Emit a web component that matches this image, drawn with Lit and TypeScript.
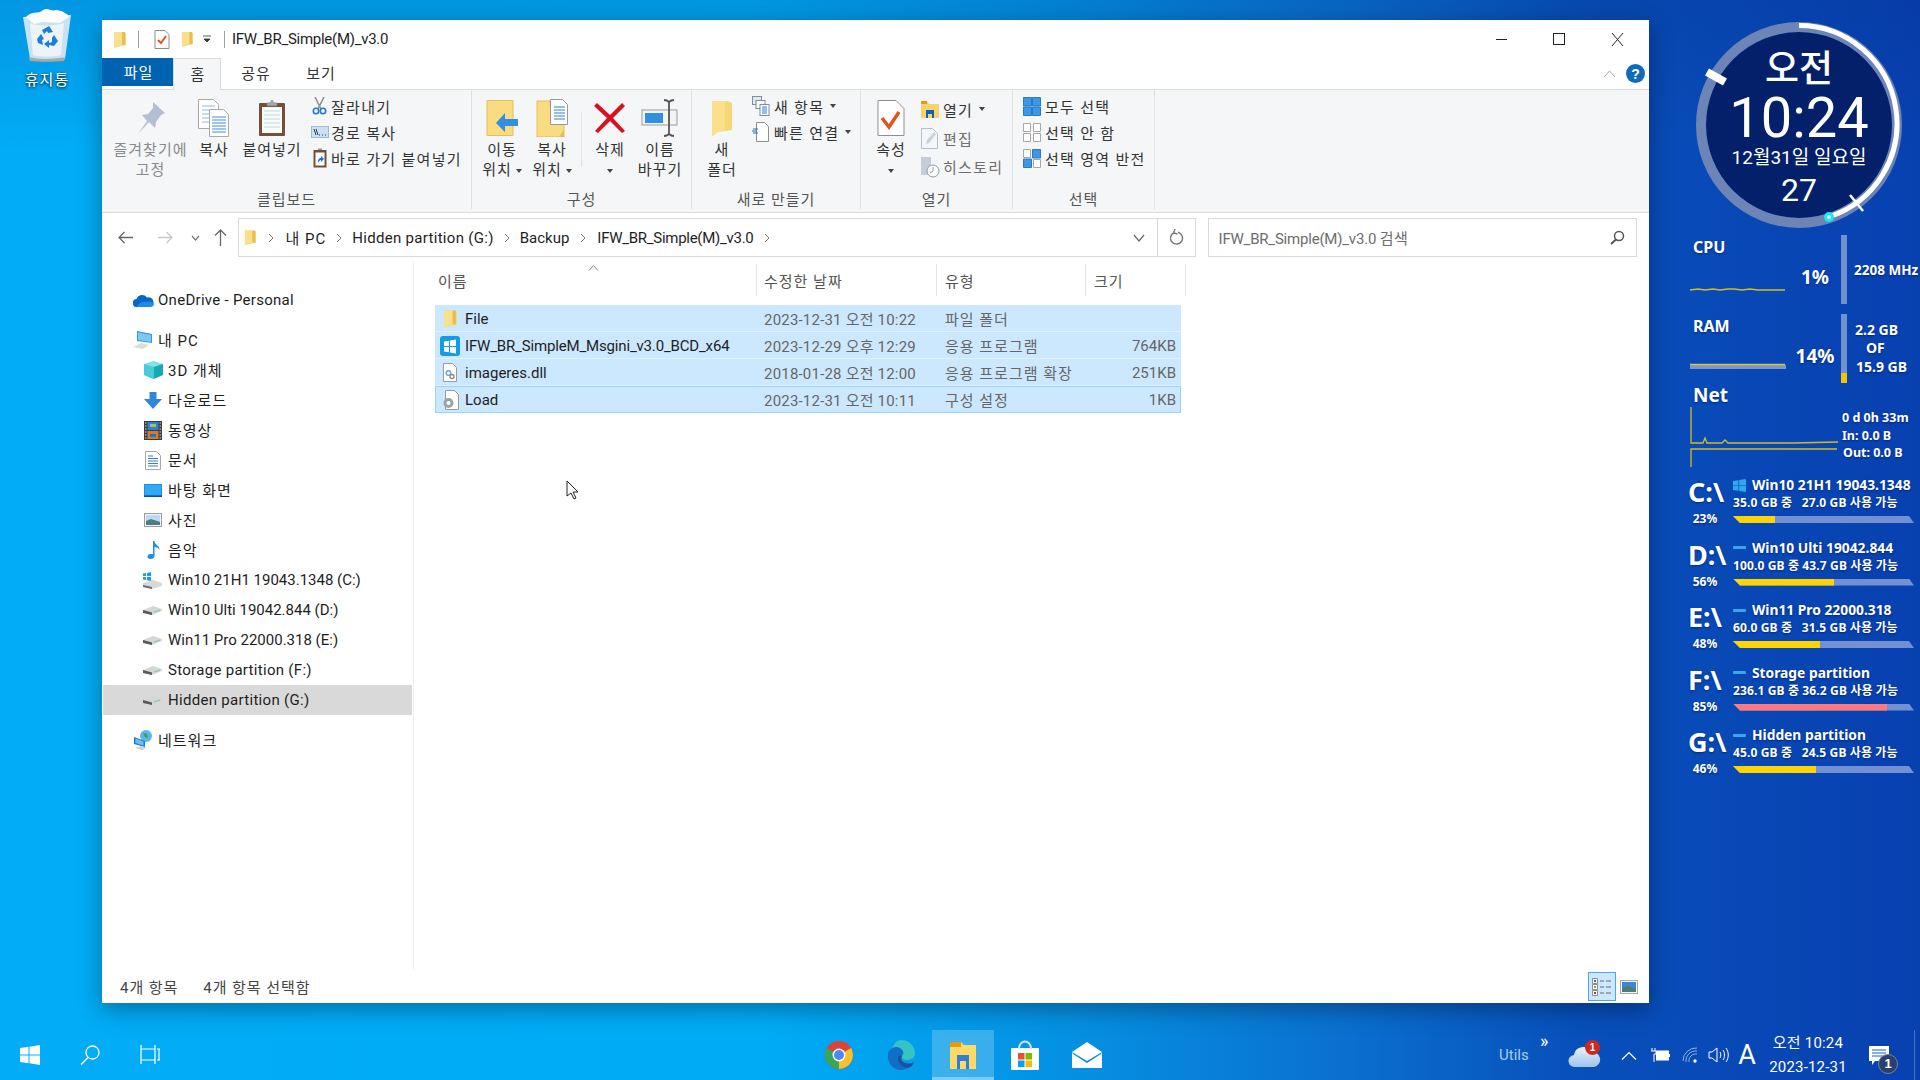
import { LitElement, html, css } from "lit";
import { customElement } from "lit/decorators.js";

const folder = (w = 14, h = 17) => html`<svg width=${w} height=${h} viewBox="0 0 14 17"><path d="M1 1h9l3 1v12l-9 2-3 1z" fill="#f7d774"/><path d="M1 1h8v13l-5 1-3 2z" fill="#fbe08c"/><path d="M9 1h3v13H9z" fill="#e8bd52"/></svg>`;
const doccheck = (w = 16, h = 19) => html`<svg width=${w} height=${h} viewBox="0 0 16 19"><path d="M1 .5h10l4 4v14H1z" fill="#fff" stroke="#8d8d8d"/><path d="M4 10l3 3 5-7" fill="none" stroke="#e2531d" stroke-width="2"/></svg>`;
const winlogo = (s = 20, c = "#fff") => html`<svg width=${s} height=${s} viewBox="0 0 20 20"><path fill=${c} d="M0 3l8.500-1.200v7.700H0zM9.500 1.700L20 0v9.500H9.500zM0 10.500h8.500v7.700L0 17zM9.500 10.500H20V20L9.500 18.300z"/></svg>`;

const I = {
  pin: html`<svg width="30" height="34" viewBox="0 0 30 34"><path d="M17 1l12 11-4 2-5 7-1 6-6-6L2 33l9-13-5-6 6-1 5-6z" fill="#b3c0d4"/></svg>`,
  copy: html`<svg width="32" height="38" viewBox="0 0 32 38"><path d="M.5.5h15l5 5v24H.5z" fill="#fff" stroke="#a9a9a9"/><path d="M4 7h13M4 11h13M4 15h13M4 19h13M4 23h13" stroke="#8fb8e8"/><path d="M11.500 10.500h14l5 5v22h-19z" fill="#fff" stroke="#a9a9a9"/><path d="M14 18h14M14 21h14M14 24h14M14 27h14M14 30h14M14 33h14" stroke="#3b8ee0"/></svg>`,
  paste: html`<svg width="28" height="38" viewBox="0 0 28 38"><rect x="1" y="4" width="26" height="33" fill="#74503a" rx="1"/><rect x="4" y="8" width="20" height="26" fill="#fbfbf6"/><path d="M6 12h16M6 16h16M6 20h16M6 24h16M6 28h16" stroke="#bcd8f0"/><path d="M9 7V4h3l2-3 2 3h3v3z" fill="#aaa" stroke="#777" stroke-width=".6"/></svg>`,
  cut: html`<svg width="15" height="18" viewBox="0 0 15 18"><path d="M3 0l6 12M12 0L6 12" stroke="#8f8f8f" stroke-width="1.600"/><circle cx="4" cy="14" r="2.700" fill="none" stroke="#1d79d4" stroke-width="1.600"/><circle cx="11" cy="14" r="2.700" fill="none" stroke="#1d79d4" stroke-width="1.600"/></svg>`,
  path: html`<svg width="18" height="12" viewBox="0 0 18 12"><rect x=".5" y=".5" width="17" height="11" fill="#c9e2f8" stroke="#9fb9d4"/><path d="M3 3l2 6M5 3l2 6M8 9h1M11 9h1M14 9h1" stroke="#334" stroke-width="1"/></svg>`,
  scut: html`<svg width="14" height="20" viewBox="0 0 14 20"><rect x=".5" y="2" width="13" height="17.500" fill="#74503a"/><rect x="2.500" y="4.500" width="9" height="13" fill="#fff"/><path d="M5 2V.5h4V2z" fill="#999"/><path d="M5 15c0-4 1-5 3-5V8l3 3-3 3v-2c-1 0-2 1-3 3z" fill="#1b6fc9"/></svg>`,
  move: html`<svg width="32" height="36" viewBox="0 0 32 36"><path d="M1 .5h26v35H1z" fill="#f9dc82" stroke="#e4bf5c"/><path d="M32 19H19v-6l-9 10 9 9v-6h13z" fill="#2f8fe0"/></svg>`,
  copyto: html`<svg width="32" height="38" viewBox="0 0 32 38"><path d="M1 2h13v5h14v31H1z" fill="#f9dc82" stroke="#e4bf5c"/><path d="M28 30v8l-5 0z" fill="#e4bf5c"/><path d="M14.500.5h12l5 5v20h-17z" fill="#fff" stroke="#999"/><path d="M18 8h11M18 11h11M18 14h11M18 17h11M18 20h11" stroke="#2f7fd6"/></svg>`,
  del: html`<svg width="32" height="32" viewBox="0 0 32 32"><path d="M3 1l13 12L28 1l3 3-12 12 12 13-3 2-12-12L4 31l-3-2 12-13L0 4z" fill="#d81020"/></svg>`,
  rename: html`<svg width="38" height="38" viewBox="0 0 38 38"><rect x="1" y="11" width="35" height="15" fill="#f4f4f4" stroke="#9a9a9a"/><rect x="4" y="14" width="18" height="10" fill="#2f8fe0"/><path d="M23 1c3 0 4 1 5 2 1-1 2-2 5-2M28 3v32M23 37c3 0 4-1 5-2 1 1 2 2 5 2" fill="none" stroke="#555" stroke-width="1.800"/></svg>`,
  newf: html`<svg width="24" height="36" viewBox="0 0 24 36"><path d="M2 1h15l5 2v27l-14 2-6 4z" fill="#f7d774"/><path d="M2 1h13v29l-7 2-6 4z" fill="#fbe08c"/></svg>`,
  newi: html`<svg width="18" height="20" viewBox="0 0 18 20"><rect x=".5" y=".5" width="9" height="8" fill="#dbe9f8" stroke="#7f8d9c"/><rect x="4" y="4.500" width="9" height="8" fill="#fff" stroke="#7f8d9c"/><rect x="8" y="8.500" width="9" height="11" fill="#fff" stroke="#7f8d9c"/><path d="M10 11h5M10 13h5M10 15h5M10 17h5" stroke="#2f7fd6"/></svg>`,
  easy: html`<svg width="17" height="20" viewBox="0 0 17 20"><path d="M4.500.5h8l4 4v15h-12z" fill="#fff" stroke="#8d8d8d"/><path d="M1 7h5M0 9h5M1 11h5" stroke="#1b6fc9"/></svg>`,
  prop: html`<svg width="28" height="36" viewBox="0 0 28 36"><path d="M1 .5h18l8 8v27H1z" fill="#fff" stroke="#8f8f8f"/><path d="M5 18l7 9 10-15" fill="none" stroke="#e2531d" stroke-width="3.500"/></svg>`,
  open: html`<svg width="20" height="20" viewBox="0 0 20 20"><path d="M1 2h6l2 3h10v14H1z" fill="#f7d370"/><path d="M1 2h6v3H1z" fill="#d99c22"/><path d="M6 11h8v8h-2v-4H8v4H6z" fill="#1261b5"/></svg>`,
  edit: html`<svg width="17" height="21" viewBox="0 0 17 21"><path d="M.5.5h11l5 5v15H.5z" fill="#f4f6fa" stroke="#b3bdcc"/><path d="M5 16l1-4L13 4l2 2-7 9z" fill="#c7d1e0"/></svg>`,
  hist: html`<svg width="20" height="22" viewBox="0 0 20 22"><path d="M1 1h10v18H1z" fill="#c4cdd9"/><circle cx="13" cy="15" r="6" fill="#fff" stroke="#8f9ba8"/><path d="M13 11v4l-3 2" stroke="#8f9ba8" fill="none"/></svg>`,
  all: html`<svg width="18" height="19" viewBox="0 0 18 19"><path fill="#3d97e6" stroke="#2a79c8" d="M.5.5h8v8.500h-8zM9.500.5h8v8.500h-8zM.5 10h8v8.500h-8zM9.500 10h8v8.500h-8z"/></svg>`,
  none: html`<svg width="18" height="19" viewBox="0 0 18 19"><path fill="#fff" stroke="#a8a8a8" d="M.5.5h7v8h-7zM10.500.5h7v8h-7zM.5 10.500h7v8h-7zM10.500 10.500h7v8h-7z"/></svg>`,
  inv: html`<svg width="18" height="19" viewBox="0 0 18 19"><path fill="#fff" stroke="#a8a8a8" d="M.5.5h7v8h-7zM10.500 10.500h7v8h-7z"/><path fill="#3d97e6" stroke="#2a79c8" d="M9.500.5h8v8.500h-8zM.5 10h8v8.500h-8z"/></svg>`,
  cloud: html`<svg width="21" height="13" viewBox="0 0 21 13"><path d="M4 13a4 4 0 0 1-.5-8A6 6 0 0 1 14 3.500a4.500 4.500 0 0 1 3 9.500z" fill="#0a65c8"/><path d="M4 13c1-3 5-6 9-5 3-2 7 0 8 2 0 2-2 3-4 3z" fill="#1c8cea"/></svg>`,
  pc: html`<svg width="20" height="18" viewBox="0 0 20 18"><path d="M4 0l15 3v9L4 10z" fill="#2f9be8"/><path d="M5 1.500l13 2.500v7L5 9z" fill="#7cc7f5"/><path d="M0 16l8-4 8 2-6 4z" fill="#dcdcdc"/></svg>`,
  cube: html`<svg width="19" height="18" viewBox="0 0 19 18"><path d="M9.500 0L19 3v11l-9.500 4L0 14V3z" fill="#7fe3e3"/><path d="M9.500 6L19 3v11l-9.500 4z" fill="#19a7b8"/><path d="M0 3l9.500 3v12L0 14z" fill="#48cbd6"/></svg>`,
  down: html`<svg width="18" height="17" viewBox="0 0 18 17"><path d="M5.500 0h7v7H18l-9 10L0 7h5.500z" fill="#2f86dc"/></svg>`,
  film: html`<svg width="18" height="19" viewBox="0 0 18 19"><rect width="18" height="19" fill="#3b3b3b"/><rect x="3.500" y="1" width="11" height="8" fill="#2f7fd6"/><rect x="3.500" y="10" width="11" height="8" fill="#d8782a"/><path d="M6 3h6v3H6z" fill="#9c5"/><path d="M6 13h6v3H6z" fill="#27b"/><path d="M1 2h1.500M1 5h1.500M1 8h1.500M1 11h1.500M1 14h1.500M1 17h1.500M15.500 2H17M15.500 5H17M15.500 8H17M15.500 11H17M15.500 14H17M15.500 17H17" stroke="#ddd"/></svg>`,
  docs: html`<svg width="16" height="19" viewBox="0 0 16 19"><path d="M.5.5h11l4 4v14H.5z" fill="#fff" stroke="#a8a8a8"/><path d="M3 5h5M3 7.500h10M3 10h10M3 12.500h10M3 15h10" stroke="#3a7fc8"/></svg>`,
  desk: html`<svg width="18" height="13" viewBox="0 0 18 13"><rect width="18" height="13" fill="#1c8fe8"/><rect x="1" y="1" width="16" height="10" fill="#31a9f3"/><rect y="11.500" width="18" height="1.500" fill="#0b4f9a"/></svg>`,
  pic: html`<svg width="18" height="14" viewBox="0 0 18 14"><rect x=".5" y=".5" width="17" height="13" fill="#f5f5f5" stroke="#9c9c9c"/><rect x="2" y="2" width="14" height="10" fill="#b9daf2"/><path d="M2 8l5-2 9 3v3H2z" fill="#4d7d83"/></svg>`,
  music: html`<svg width="13" height="18" viewBox="0 0 13 18"><path d="M6 0h1.500c0 4 5 4 5 9-1-2-3-3-5-3v9c0 2-2 3-4 3s-3-1-3-2.500S2 13 4 13c1 0 1.500 0 2 .3z" fill="#1c8fe8"/></svg>`,
  driveC: html`<svg width="20" height="17" viewBox="0 0 20 17"><path d="M0 11l10-3 9 3v3l-10 3L0 15z" fill="#d8d8d8"/><path d="M0 13l9 2v2l-9-2z" fill="#6b6b6b"/><path fill="#12a0ee" d="M0 1.500l3-.5v3H0zM4 1l4-1v4H4zM0 5h3v3l-3-.5zM4 5h4v4l-4-.7z"/></svg>`,
  drive: html`<svg width="20" height="10" viewBox="0 0 20 10"><path d="M0 5l10-4 9 3v2L9 10 0 7.500z" fill="#d6d6d6"/><path d="M0 5l9 2.500V10L0 8z" fill="#5a5a5a"/><path d="M11 7l6-2" stroke="#90c090"/></svg>`,
  net: html`<svg width="20" height="20" viewBox="0 0 20 20"><circle cx="13" cy="6" r="6" fill="#59b7ea"/><path d="M10 3l4 1 1 4-3-1z" fill="#3e9a4c"/><path d="M1 7l11 4v6l-11-3z" fill="#1f7cd0"/><path d="M2.500 8.500l8 3v4l-8-2.500z" fill="#6cc0f0"/><path d="M2 18l6-2 6 2-5 2z" fill="#cfcfcf"/></svg>`,
  fileFolder: html`<svg width="15" height="19" viewBox="0 0 14 17"><path d="M1 1h9l3 1v12l-9 2-3 1z" fill="#f7d774"/><path d="M1 1h8v13l-5 1-3 2z" fill="#fbe08c"/><path d="M9 1h3v13H9z" fill="#e8bd52"/></svg>`,
  app: html`<svg width="20" height="20" viewBox="0 0 20 20"><rect width="20" height="20" rx="3" fill="#129ce4"/><path fill="#fff" d="M4 5.500l5-.8V10H4zM10 4.500l6-1V10h-6zM4 11h5v5.300l-5-.8zM10 11h6v6.500l-6-1z"/></svg>`,
  dll: html`<svg width="14" height="19" viewBox="0 0 14 19"><path d="M.5.5h9l4 4v14H.5z" fill="#fff" stroke="#9a9a9a"/><circle cx="5.500" cy="10" r="2.300" fill="none" stroke="#7d9fc0" stroke-width="1.500"/><circle cx="9" cy="13.500" r="2" fill="none" stroke="#8a8a8a" stroke-width="1.400"/></svg>`,
  ini: html`<svg width="17" height="20" viewBox="0 0 17 20"><path d="M3.500.5h9l4 4v15h-13z" fill="#fff" stroke="#9a9a9a"/><circle cx="6.500" cy="13" r="5" fill="#9aa3ac"/><circle cx="6.500" cy="13" r="2" fill="#fff"/></svg>`,
};

const dd = html`<i class="dd"></i>`;
const chev = html`<svg width="6" height="10" viewBox="0 0 6 10"><path d="M1 1l4 4-4 4" fill="none" stroke="#777"/></svg>`;

type Item = any;
const groups: { w: number; label: string; items: Item[] }[] = [
  { w: 370, label: "클립보드", items: [
    { w: 97, icon: I.pin, l: ["즐겨찾기에", "고정"], off: true },
    { w: 30, icon: I.copy, l: ["복사"] },
    { w: 80, ml: 3, icon: I.paste, l: ["붙여넣기"] },
    { ml: -1, list: [[I.cut, "잘라내기"], [I.path, "경로 복사"], [I.scut, "바로 가기 붙여넣기"]] },
  ] },
  { w: 220, label: "구성", items: [
    { w: 48, ml: 6, icon: I.move, l: ["이동", "위치"], d: 1 },
    { w: 48, ml: 2, icon: I.copyto, l: ["복사", "위치"], d: 1 },
    { sep: 1, ml: 5 },
    { w: 48, ml: 4, icon: I.del, l: ["삭제", ""], d: 1 },
    { w: 48, ml: 2, icon: I.rename, l: ["이름", "바꾸기"] },
  ] },
  { w: 169, label: "새로 만들기", items: [
    { w: 48, ml: 6, icon: I.newf, l: ["새", "폴더"] },
    { ml: 8, shift: 1, list: [[I.newi, "새 항목", 1], [I.easy, "빠른 연결", 1]] },
  ] },
  { w: 152, label: "열기", items: [
    { w: 48, ml: 6, icon: I.prop, l: ["속성", ""], d: 1 },
    { ml: 8, tall: 1, shift: 1, list: [[I.open, "열기", 1], [I.edit, "편집", 0, 1], [I.hist, "히스토리", 0, 1]] },
  ] },
  { w: 142, label: "선택", items: [
    { ml: 12, shift: 1, list: [[I.all, "모두 선택"], [I.none, "선택 안 함"], [I.inv, "선택 영역 반전"]] },
  ] },
];

const tree: [any, string, string][] = [
  [I.cube, "3D 개체", "k"], [I.down, "다운로드", "k"], [I.film, "동영상", "k"], [I.docs, "문서", "k"],
  [I.desk, "바탕 화면", "k"], [I.pic, "사진", "k"], [I.music, "음악", "k"],
  [I.driveC, "Win10 21H1 19043.1348 (C:)", ""], [I.drive, "Win10 Ulti 19042.844 (D:)", ""],
  [I.drive, "Win11 Pro 22000.318 (E:)", ""], [I.drive, "Storage partition (F:)", "w"],
  [I.drive, "Hidden partition (G:)", "w"],
];

const files = [
  [I.fileFolder, "File", "2023-12-31 오전 10:22", "파일 폴더", ""],
  [I.app, "IFW_BR_SimpleM_Msgini_v3.0_BCD_x64", "2023-12-29 오후 12:29", "응용 프로그램", "764KB"],
  [I.dll, "imageres.dll", "2018-01-28 오전 12:00", "응용 프로그램 확장", "251KB"],
  [I.ini, "Load", "2023-12-31 오전 10:11", "구성 설정", "1KB"],
];

const drives = [
  ["C:\\", "23%", "Win10 21H1 19043.1348", "35.0 GB 중 \u00a0 27.0 GB 사용 가능", 23],
  ["D:\\", "56%", "Win10 Ulti 19042.844", "100.0 GB 중 43.7 GB 사용 가능", 56],
  ["E:\\", "48%", "Win11 Pro 22000.318", "60.0 GB 중 \u00a0 31.5 GB 사용 가능", 48],
  ["F:\\", "85%", "Storage partition", "236.1 GB 중 36.2 GB 사용 가능", 85],
  ["G:\\", "46%", "Hidden partition", "45.0 GB 중 \u00a0 24.5 GB 사용 가능", 46],
];

@customElement("app-root")
export class AppRoot extends LitElement {
  static styles = css`
    :host { display: block; position: relative; width: 1920px; height: 1080px; overflow: hidden;
      font-family: Roboto, "Noto Sans CJK KR", sans-serif; font-size: 15px; color: #1e1e1e;
      background:
        linear-gradient(180deg, rgba(0,40,120,.16), rgba(0,40,120,0) 14%),
        linear-gradient(90deg, #02acf6 0, #00abf5 40%, #0590e2 56%, #0a70cf 70%, #0850bb 82%, #0840b0 100%); }
    svg { display: block; flex: none; }
    .k { letter-spacing: 1px; }
    .w0 { letter-spacing: -.27px; }
    .w1 { letter-spacing: -.16px; }
    .w { letter-spacing: .3px; }
    .bin { position: absolute; left: 8px; top: 8px; width: 78px; display: flex; flex-direction: column; align-items: center; gap: 6px; color: #fff; text-shadow: 0 1px 3px #000; letter-spacing: 1px; }
    .window { position: absolute; left: 102px; top: 20px; width: 1547px; height: 983px; background: #fff; display: flex; flex-direction: column; box-shadow: 0 6px 22px rgba(0,0,0,.35); }
    .title { height: 38px; display: flex; align-items: center; flex: none; position: relative; }
    .title .ql { display: flex; align-items: center; width: 130px; padding-left: 11px; box-sizing: border-box; }
    .vs { width: 1px; height: 17px; background: #a0a0a0; }
    .s15 { margin: 0 15px 0 11px; }
    .ga { width: 11px; flex: none; } .gb { width: 9px; flex: none; } .gc { width: 13px; flex: none; }
    .ctrl { margin-left: auto; display: flex; padding-right: 3px; }
    .ctrl span { width: 58px; height: 38px; display: flex; align-items: center; justify-content: center; }
    .tabs { height: 31px; display: flex; flex: none; align-items: stretch; position: relative; z-index: 1; }
    .tab { display: flex; align-items: center; justify-content: center; color: #333; padding: 0 0 2px 2px; box-sizing: border-box; letter-spacing: 1px; }
    .tab.file { width: 71px; height: 28px; background: #0063b1; color: #fff; }
    .tab.home { width: 48px; background: #f5f6f7; border: 1px solid #dadbdc; border-bottom: none; height: 32px; }
    .tab.t3 { width: 66px; padding-left: 4px; } .tab.t4 { width: 64px; padding-left: 4px; }
    .tabs .right { margin-left: auto; display: flex; align-items: center; gap: 10px; padding-right: 4px; }
    .help { width: 19px; height: 19px; border-radius: 50%; background: #0f6cbd; color: #fff; font: bold 14px "Liberation Sans", sans-serif; display: flex; align-items: center; justify-content: center; }
    .ribbon { height: 124px; flex: none; display: flex; background: #f5f6f7; border-top: 1px solid #dadbdc; border-bottom: 1px solid #dadbdc; box-sizing: border-box; }
    .group { display: flex; flex-direction: column; border-right: 1px solid #dfe0e2; box-sizing: border-box; margin-bottom: 3px; flex: none; }
    .items { flex: 1; display: flex; min-height: 0; }
    .glabel { height: 28px; box-sizing: border-box; padding-top: 6px; display: flex; align-items: center; justify-content: center; color: #555; letter-spacing: 1px; }
    .big { display: flex; flex-direction: column; align-items: center; padding-top: 5px; text-align: center; flex: none; color: #333; letter-spacing: 1px; white-space: nowrap; }
    .big .ic { height: 45px; display: flex; align-items: center; justify-content: center; }
    .big div.t { line-height: 21px; height: 20.500px; display: flex; align-items: center; gap: 4px; justify-content: center; }
    .big.off { color: #8a8a8a; }
    .dd { display: inline-block; width: 0; height: 0; border-top: 4px solid #444; border-left: 3px solid transparent; border-right: 3px solid transparent; flex: none; }
    .rsep { width: 1px; height: 55px; background: #dfe0e2; margin-top: 22px; flex: none; }
    .list { display: flex; flex-direction: column; padding-top: 3px; flex: none; color: #333; }
    .small { height: 26px; display: flex; align-items: center; gap: 3px; letter-spacing: 1.300px; white-space: nowrap; }
    .list.tall { padding-top: 5px; } .list.tall .small { height: 29px; }
    .list.shift .si svg { transform: translateX(-2px); }
    .small.off { color: #6e6e6e; }
    .small .si { width: 17px; display: flex; justify-content: center; flex: none; }
    .small .dd { margin-left: 3px; }
    .nav { height: 49px; flex: none; display: flex; align-items: center; position: relative; }
    .navb { width: 135.500px; display: flex; align-items: center; flex: none; box-sizing: border-box; padding-left: 16px; }
    .navb span { display: flex; justify-content: center; flex: none; }
    .nb1 { width: 16px; } .nb2a { width: 39px; margin-left: 11.500px; } .nb3 { width: 12px; margin-left: 4.500px; } .nb4 { width: 14px; margin-left: 12px; }
    .addr { width: 958px; height: 39px; box-sizing: border-box; border: 1px solid #d9d9d9; display: flex; align-items: center; flex: none; }
    .addr .crumbs { flex: 1; display: flex; align-items: center; padding-left: 5px; }
    .crumbs .c { color: #666; flex: none; display: flex; justify-content: center; }
    .crumbs .c1w { width: 29px; } .crumbs .c2w { width: 26px; } .crumbs .c3w { width: 26px; } .crumbs .c4w { width: 28px; } .crumbs .c5w { width: 26px; }
    .addr .ab { height: 37px; display: flex; align-items: center; justify-content: center; box-sizing: border-box; }
    .addr .ab.r { width: 38px; border-left: 1px solid #d9d9d9; padding-left: 2px; }
    .addr .ab.d { width: 38px; padding-left: 2px; }
    .search { width: 429px; height: 39px; margin-left: 12px; box-sizing: border-box; border: 1px solid #d9d9d9; display: flex; align-items: center; justify-content: space-between; padding: 0 11px 0 10px; color: #6d6d6d; flex: none; }
    .search .sk { letter-spacing: .5px; }
    .search .sl { letter-spacing: -.2px; }
    .body { flex: 1; display: flex; min-height: 0; }
    .side { width: 312px; flex: none; border-right: 1px solid #f0f0f0; padding: 23px 0 0 1px; box-sizing: border-box; }
    .node { height: 30px; display: flex; align-items: center; white-space: nowrap; }
    .node .k { position: relative; top: -1px; }
    .node .ni { width: 20px; flex: none; display: flex; justify-content: center; }
    .node.top { padding-left: 30px; gap: 5px; }
    .node.top + .node.top { margin-top: 10px; }
    .node.ch { padding-left: 40px; gap: 5px; }
    .node.sel { background: #d9d9d9; margin-right: 1px; }
    .node.last { margin-top: 10px; }
    .od { letter-spacing: .28px; }
    .main { flex: 1; padding-left: 21px; min-width: 0; }
    .hdr { height: 38px; display: grid; grid-template-columns: 322px 180px 149px 100px; width: 751px; position: relative; color: #555; margin-bottom: 5px; padding-top: 2px; box-sizing: border-box; }
    .hdr div { display: flex; align-items: center; height: 32px; border-right: 1px solid #e5e5e5; padding-left: 7px; box-sizing: border-box; letter-spacing: 1px; }
    .hdr div:first-child { padding-left: 3px; position: relative; }
    .hdr div:nth-child(n+3) { padding-left: 8px; }
    .caret { position: absolute; left: 153px; top: 1px; }
    .row { height: 27px; width: 746px; display: grid; grid-template-columns: 322px 180px 149px 95px; background: #cce8ff; box-sizing: border-box; align-items: center; border-bottom: 1px solid #e0f0ff; color: #666; padding-top: 1px; }
    .row.focus { border-bottom: none; box-shadow: inset 0 0 0 1px #99d1ff; padding-top: 0; }
    .row .nm { display: flex; align-items: center; color: #1e1e1e; white-space: nowrap; }
    .row .nm .fi { width: 30px; display: flex; justify-content: center; flex: none; box-sizing: border-box; }
    .row > div:nth-child(2) { padding-left: 7px; white-space: nowrap; letter-spacing: .2px; }
    .row > div:nth-child(3) { padding-left: 8px; white-space: nowrap; }
    .row > div:nth-child(4) { text-align: right; padding-right: 5px; }
    .status { height: 33px; flex: none; display: flex; align-items: center; color: #444; padding-left: 18px; gap: 25px; letter-spacing: .95px; position: relative; }
    .views { margin-left: auto; display: flex; align-items: center; padding-right: 11px; gap: 4px; }
    .vbtn { width: 28px; height: 29px; box-sizing: border-box; background: #cce8ff; border: 1px solid #4ea6e6; display: flex; align-items: center; justify-content: center; }
    .cursor { position: absolute; left: 566px; top: 480px; }

    .tb { position: absolute; left: 0; right: 0; bottom: 0; height: 50px; display: flex; align-items: center; color: #fff; }
    .tbl { display: flex; width: 180px; flex: none; }
    .tbl span { width: 60px; display: flex; justify-content: center; }
    .tbc { display: flex; margin-left: 628px; }
    .tbc span { width: 62px; height: 50px; display: flex; align-items: center; justify-content: center; box-sizing: border-box; }
    .tbc span.on { background: rgba(255,255,255,.22); border-bottom: 3px solid rgba(255,255,255,.35); padding-top: 3px; }
    .tray { position: absolute; right: 0; top: 0; height: 50px; width: 421px; display: flex; align-items: center; }
    .tray > span { flex: none; }
    .utils { color: #a9cdf0; width: 41px; }
    .more { position: relative; top: -14px; width: 28px; font-size: 18px; color: #fff; line-height: 1; }
    .cloudw { position: relative; width: 53px; flex: none; }
    .badge { position: absolute; left: 17px; top: -3px; width: 15px; height: 15px; border-radius: 50%; background: #d0281c; font: bold 10px "Liberation Sans", sans-serif; display: flex; align-items: center; justify-content: center; color: #fff; }
    .t1 { width: 29px; } .t2 { width: 32px; } .t3x { width: 26px; } .t4x { width: 21px; }
    .tray .A { font: 400 27px Roboto, sans-serif; width: 42px; text-align: center; margin-left: -3px; }
    .clockt { width: 80px; text-align: center; line-height: 24px; font-size: 15px; flex: none; letter-spacing: .2px; white-space: nowrap; }
    .note { position: relative; margin-left: 21px; flex: none; }
    .nb { position: absolute; left: 9px; top: 8px; width: 20px; height: 20px; border-radius: 50%; background: #2b3f6c; border: 1px solid #6d84a8; box-sizing: border-box; color: #fff; font: bold 13px "Liberation Sans", sans-serif; display: flex; align-items: center; justify-content: center; }
    .tbdiv { position: absolute; right: 5px; top: 0; width: 1px; height: 50px; background: rgba(255,255,255,.25); }

    .wd { position: absolute; color: #fff; font-family: "Noto Sans", "Noto Sans CJK KR", sans-serif; font-weight: 700; text-shadow: 0 1px 2px rgba(0,20,80,.6); }
    .clock { left: 1696px; top: 22px; width: 206px; height: 206px; display: flex; flex-direction: column; align-items: center; padding-top: 31px; box-sizing: border-box; font-weight: 400; }
    .clock svg { position: absolute; left: 0; top: 0; }
    .clock div { position: relative; white-space: nowrap; font-family: Roboto, "Noto Sans CJK KR", sans-serif; text-shadow: none; }
    .c1 { font-size: 37px; line-height: 34px; font-weight: 500; }
    .c2 { font-size: 56px; line-height: 62px; }
    .c3 { font-size: 19px; line-height: 18px; }
    .c4 { font-size: 32px; line-height: 46px; }
    .mon { left: 1690px; width: 230px; display: grid; grid-template-columns: 94px 57px 6px 73px; height: 69px; }
    .mon .lb { font-size: 16px; padding-left: 3px; line-height: 24px; height: 48px; }
    .mon .pc { display: flex; align-items: center; justify-content: center; font-size: 19px; padding: 14px 0 0 5px; }
    .vb { background: #7391d0; position: relative; }
    .vb i { position: absolute; left: 0; right: 0; bottom: 0; background: #f5c400; display: block; }
    .mon .rt { font-size: 14px; padding-left: 7px; display: flex; flex-direction: column; justify-content: center; white-space: nowrap; }
    .mhz { font-size: 13.500px; }
    .rl { line-height: 18.500px; }
    .r1 { margin-left: 1px; } .r2 { margin-left: 12px; } .r3 { margin-left: 2px; }
    .g1 { margin-top: 4px; } .g2 { margin-top: 1px; }
    .cpu { top: 235px; } .ram { top: 314px; }
    .net { left: 1690px; top: 385px; width: 230px; }
    .net .lb { font-size: 19px; padding-left: 3px; line-height: 20px; }
    .net .nb2 { display: flex; }
    .net .nt { font-size: 12.500px; line-height: 17.500px; padding-top: 4px; margin-left: 2px; white-space: nowrap; }
    .out { margin-left: 1px; }
    .drives { left: 1688px; top: 472px; display: flex; flex-direction: column; }
    .drive { height: 62.500px; display: grid; grid-template-columns: 45px 181px; }
    .lt { font-size: 27px; line-height: 40px; }
    .pct { font-size: 12px; line-height: 12px; width: 34px; text-align: center; margin-top: 1px; }
    .dt { display: flex; align-items: center; font-size: 13.800px; line-height: 18px; height: 18px; margin-top: 4px; white-space: nowrap; }
    .dt .di { width: 19px; flex: none; }
    .dash { display: block; width: 13px; height: 3px; background: #3aa6f0; border-radius: 1px; }
    .ds { font-size: 12px; line-height: 17px; white-space: nowrap; letter-spacing: .13px; }
    .bar { height: 7px; margin-top: 5px; background: #7391d0; clip-path: polygon(0 0, 176px 0, 181px 100%, 7px 100%); }
    .bar i { display: block; height: 100%; background: #ffd400; }
    .bar i.hot { background: #ff7a80; }
  `;

  render() {
    return html`
      <div class="bin">
        <svg width="50" height="54" viewBox="0 0 50 54">
          <path d="M1 9l48-2-6 44c-6 2-26 3-35 0z" fill="#dfeaf4" opacity=".9"/>
          <path d="M4 9c6-7 12-2 17-7 5-3 8 2 13 0 6 0 10 4 14 6l-10 7-17-1-9 2z" fill="#fdfdfd"/>
          <path d="M7 49c9 3 29 2 36 0l-1 4c-9 1-26 1-34 0z" fill="#a9a9a9"/>
          <path d="M8 15c10 4 24 3 34 0l-3 32c-8 2-20 2-28 0z" fill="#eef3f8"/>
          <path d="M20 22l7-4 4 6-5 1-1-2-3 3zM15 31l4-5 3 5-2 1 1 5-5-2zM32 27l4 6-4 5-5-1v3l-5-4 5-4v3l3-1 0-4z" fill="#1a7fd6"/>
        </svg>
        <span>휴지통</span>
      </div>

      <div class="window">
        <div class="title">
          <div class="ql">
            ${folder(14, 17)}
            <i class="vs s15"></i>
            ${doccheck()}
            <span class="ga"></span>
            ${folder(13, 18)}
            <span class="gb"></span>
            <svg width="8" height="8" viewBox="0 0 8 8"><path d="M0 1h8M1 4h6l-3 3z" stroke="#333" fill="#333" stroke-width=".8"/></svg>
            <span class="gc"></span>
            <i class="vs"></i>
          </div>
          <span class="w0">IFW_BR_Simple(M)_v3.0</span>
          <div class="ctrl">
            <span><svg width="11" height="1"><rect width="11" height="1" fill="#222"/></svg></span>
            <span><svg width="12" height="12"><rect x=".5" y=".5" width="11" height="11" fill="none" stroke="#222"/></svg></span>
            <span><svg width="13" height="13" viewBox="0 0 13 13"><path d="M1 0l11 13M12 0L1 13" stroke="#222" fill="none"/></svg></span>
          </div>
        </div>

        <div class="tabs">
          <div class="tab file">파일</div>
          <div class="tab home">홈</div>
          <div class="tab t3">공유</div>
          <div class="tab t4">보기</div>
          <div class="right">
            <svg width="13" height="8" viewBox="0 0 13 8"><path d="M1 7l5.500-6L12 7" fill="none" stroke="#a8a8a8"/></svg>
            <div class="help">?</div>
          </div>
        </div>

        <div class="ribbon">
          ${groups.map((g) => html`
            <div class="group" style="width:${g.w}px">
              <div class="items">
                ${g.items.map((it: Item) => this.ribbonItem(it))}
              </div>
              <div class="glabel">${g.label}</div>
            </div>`)}
        </div>

        <div class="nav">
          <div class="navb">
            <span class="nb1"><svg width="16" height="13" viewBox="0 0 16 13"><path d="M15 6.500H1M6.500 1L1 6.500 6.500 12" fill="none" stroke="#666" stroke-width="1.300"/></svg></span>
            <span class="nb2a"><svg width="16" height="13" viewBox="0 0 16 13"><path d="M1 6.500h14M9.500 1L15 6.500 9.500 12" fill="none" stroke="#c8c8c8" stroke-width="1.300"/></svg></span>
            <span class="nb3"><svg width="9" height="6" viewBox="0 0 9 6"><path d="M1 1l3.500 4L8 1" fill="none" stroke="#777" stroke-width="1.200"/></svg></span>
            <span class="nb4"><svg width="13" height="17" viewBox="0 0 13 17"><path d="M6.500 17V1M1 6.500L6.500 1 12 6.500" fill="none" stroke="#666" stroke-width="1.300"/></svg></span>
          </div>
          <div class="addr">
            <div class="crumbs">
              ${folder(13, 17)}
              <span class="c c1w">${chev}</span>
              <span class="k">내 PC</span>
              <span class="c c2w">${chev}</span>
              <span class="w">Hidden partition (G:)</span>
              <span class="c c3w">${chev}</span>
              <span>Backup</span>
              <span class="c c4w">${chev}</span>
              <span class="w0">IFW_BR_Simple(M)_v3.0</span>
              <span class="c c5w">${chev}</span>
            </div>
            <div class="ab d"><svg width="12" height="8" viewBox="0 0 12 8"><path d="M1 1l5 6 5-6" fill="none" stroke="#666" stroke-width="1.200"/></svg></div>
            <div class="ab r"><svg width="14" height="17" viewBox="0 0 14 17"><path d="M8 3.300a6 6 0 1 1-4.500.6M5 0l-1.500 4 4 1" fill="none" stroke="#777" stroke-width="1.400"/></svg></div>
          </div>
          <div class="search">
            <span class="sl">IFW_BR_Simple(M)_v3.0 <span class="sk">검색</span></span>
            <svg width="15" height="15" viewBox="0 0 15 15"><circle cx="9" cy="6" r="4.500" fill="none" stroke="#555" stroke-width="1.500"/><path d="M6 9.500L1 14" stroke="#555" stroke-width="2"/></svg>
          </div>
        </div>

        <div class="body">
          <div class="side">
            <div class="node top"><span class="ni">${I.cloud}</span><span class="od">OneDrive - Personal</span></div>
            <div class="node top"><span class="ni">${I.pc}</span><span class="k">내 PC</span></div>
            ${tree.map((t, i) => html`
              <div class="node ch ${i === tree.length - 1 ? "sel" : ""}"><span class="ni">${t[0]}</span><span class=${t[2]}>${t[1]}</span></div>`)}
            <div class="node top last"><span class="ni">${I.net}</span><span class="k">네트워크</span></div>
          </div>
          <div class="main">
            <div class="hdr">
              <div>이름<svg class="caret" width="11" height="6" viewBox="0 0 11 6"><path d="M1 5.500l4.500-5 4.500 5" fill="none" stroke="#888"/></svg></div>
              <div>수정한 날짜</div><div>유형</div><div>크기</div>
            </div>
            ${files.map((f, i) => html`
              <div class="row ${i === 3 ? "focus" : ""}">
                <div class="nm"><span class="fi">${f[0]}</span><span class=${i === 1 ? "w1" : ""}>${f[1]}</span></div>
                <div>${f[2]}</div><div class="k">${f[3]}</div><div>${f[4]}</div>
              </div>`)}
          </div>
        </div>

        <div class="status">
          <span>4개 항목</span><span>4개 항목 선택함</span>
          <div class="views">
            <div class="vbtn"><svg width="20" height="18" viewBox="0 0 20 18"><path d="M.5.5h5v5h-5zM.5 6.500h5v5h-5zM.5 12.500h5v5h-5z" fill="#fff" stroke="#8a8a8a"/><rect x="2" y="2" width="2" height="2" fill="#3a6fb0"/><rect x="2" y="8" width="2" height="2" fill="#9a9a20"/><rect x="2" y="14" width="2" height="2" fill="#c03030"/><path d="M8 3h4M14 3h5M8 9h4M14 9h5M8 15h4M14 15h5" stroke="#666"/></svg></div>
            <svg width="18" height="14" viewBox="0 0 18 14"><rect x=".5" y=".5" width="17" height="13" fill="#f5f5f5" stroke="#aaa"/><rect x="2" y="2" width="14" height="10" fill="#3a86d8"/><path d="M2 8l6-2 8 3v3H2z" fill="#4d7d73"/></svg>
          </div>
        </div>
      </div>

      <svg class="cursor" width="13" height="20" viewBox="0 0 13 20"><path d="M1 1v15l4-3 3 6 2-1-3-6h5z" fill="#fff" stroke="#222"/></svg>

      <div class="tb">
        <div class="tbl">
          <span>${winlogo(20)}</span>
          <span><svg width="20" height="20" viewBox="0 0 20 20"><circle cx="12.500" cy="7.500" r="6.500" fill="none" stroke="#fff" stroke-width="1.300"/><path d="M8 12.500L1 19.500" stroke="#fff" stroke-width="1.500"/></svg></span>
          <span><svg width="20" height="19" viewBox="0 0 20 19"><path d="M1 0v19M15 0v19M1 4h14v11H1zM17 4h3M17 15h3M19 4v11" fill="none" stroke="#fff" stroke-width="1.200"/></svg></span>
        </div>
        <div class="tbc">
          <span><svg width="28" height="28" viewBox="0 0 28 28"><circle cx="14" cy="14" r="14" fill="#db4437"/><path d="M14 14L26.100 7A14 14 0 0 1 14 28z" fill="#fbc02d"/><path d="M14 14L14 28A14 14 0 0 1 1.900 7z" fill="#3aa757"/><circle cx="14" cy="14" r="6.500" fill="#fff"/><circle cx="14" cy="14" r="5" fill="#4a8af4"/></svg></span>
          <span><svg width="28" height="30" viewBox="0 0 28 30"><path d="M14 0c8 0 14 6 14 13 0 5-4 7-8 7-3 0-6-2-5-4 1-1 2-2 1-4-2-4-9-4-12 0C6 5 9 0 14 0z" fill="#36c3c4"/><path d="M1 14c0-2 1-4 3-5 3-3 9-3 12 2 1 2-1 3-1 5-3-2-5 1-4 5 1 3 5 7 10 7-2 1-5 2-7 2C6 30 0 23 1 14z" fill="#0f6fc5"/><path d="M11 21c1 3 5 7 10 7 3-1 5-3 6-6-3 2-9 2-12-1-1-1-1-4 0-5-3-2-5 1-4 5z" fill="#1b4fa0"/></svg></span>
          <span class="on"><svg width="28" height="28" viewBox="0 0 28 28"><path d="M1 1h11l3 3h12v24H1z" fill="#ffd966"/><path d="M1 1h11v5H1z" fill="#e09d13"/><path d="M8 14h12v14h-3v-8h-6v8H8z" fill="#2f7fd6"/><rect x="11" y="20" width="6" height="8" fill="#ffd966"/></svg></span>
          <span><svg width="28" height="30" viewBox="0 0 28 30"><rect y="8" width="28" height="22" fill="#fff" rx="1"/><path d="M8 9c0-10 12-10 12 0" fill="none" stroke="#cfe6f8" stroke-width="2"/><rect x="7" y="13" width="6.500" height="6.500" fill="#e8512a"/><rect x="14.500" y="13" width="6.500" height="6.500" fill="#7fba00"/><rect x="7" y="20.500" width="6.500" height="6.500" fill="#00a4ef"/><rect x="14.500" y="20.500" width="6.500" height="6.500" fill="#ffb900"/></svg></span>
          <span><svg width="30" height="26" viewBox="0 0 30 26"><path d="M15 0L30 10v16H0V10z" fill="#fff"/><path d="M0 10l15 9 15-9-1 2-14 9L1 12z" fill="#0a8ae0"/></svg></span>
        </div>
        <div class="tray">
          <span class="utils">Utils</span>
          <span class="more">»</span>
          <div class="cloudw">
            <svg width="33" height="24" viewBox="0 0 33 24"><defs><linearGradient id="cg" x1="0" y1="0" x2="0" y2="1"><stop offset="0" stop-color="#e8f2fb"/><stop offset="1" stop-color="#9cc4ec"/></linearGradient></defs><path d="M7 24a6 6 0 0 1-1-12 9 9 0 0 1 17-3 7 7 0 0 1 3 15z" fill="url(#cg)"/></svg>
            <span class="badge">1</span>
          </div>
          <span class="t1"><svg width="16" height="9" viewBox="0 0 16 9"><path d="M1 8.500l7-7 7 7" fill="none" stroke="#fff" stroke-width="1.200"/></svg></span>
          <span class="t2"><svg width="20" height="14" viewBox="0 0 20 14"><path d="M2 0v3M5 0v3M1 3h5v3H4v8" fill="none" stroke="#fff"/><rect x="6.500" y="3" width="12" height="9" fill="#fff" stroke="#fff"/><rect x="19" y="6" width="1" height="3" fill="#fff"/></svg></span>
          <span class="t3x"><svg width="16" height="16" viewBox="0 0 16 16"><path d="M1 14A13 13 0 0 1 15 1M4 15a10 10 0 0 1 11-11M7 15a7 7 0 0 1 8-8" fill="none" stroke="#8fb4e4"/><circle cx="13" cy="14" r="1.700" fill="#fff"/></svg></span>
          <span class="t4x"><svg width="21" height="16" viewBox="0 0 21 16"><path d="M1 5h3l5-4v14l-5-4H1z" fill="none" stroke="#fff"/><path d="M12 5c1 2 1 4 0 6M15 3c2 3 2 7 0 10M18 1c3 4 3 10 0 14" fill="none" stroke="#fff"/></svg></span>
          <span class="A">A</span>
          <div class="clockt"><div>오전 10:24</div><div>2023-12-31</div></div>
          <div class="note">
            <svg width="20" height="19" viewBox="0 0 20 19"><path d="M0 0h20v15H6l-3 4v-4H0z" fill="#fff"/><path d="M3 4h14M3 7h14M3 10h14" stroke="#1560c5"/></svg>
            <span class="nb">1</span>
          </div>
          <i class="tbdiv"></i>
        </div>
      </div>

      <div class="wd clock">
        <svg width="206" height="206" viewBox="0 0 206 206">
          <circle cx="103" cy="103" r="93" fill="#04206b"/>
          <circle cx="103" cy="103" r="98" fill="none" stroke="#6d84b6" stroke-width="10"/>
          <path d="M103 3.500A98 98 0 0 1 133.900 194.500" fill="none" stroke="#fff" stroke-width="5"/>
          <path d="M11 50l18 10" stroke="#fff" stroke-width="8"/>
          <path d="M154 173l13 16" stroke="#fff" stroke-width="2.500"/>
          <circle cx="133" cy="195" r="5" fill="#19e6f0"/><circle cx="133" cy="195" r="2" fill="#dffcff"/>
        </svg>
        <div class="c1">오전</div>
        <div class="c2">10:24</div>
        <div class="c3">12월31일 일요일</div>
        <div class="c4">27</div>
      </div>

      <div class="wd mon cpu">
        <div>
          <div class="lb">CPU</div>
          <svg class="g1" width="95" height="6" viewBox="0 0 95 6"><path d="M0 3l8-1 7 1 8-1 7 1 8-1 6 0 8 1 8-1 8 1 10 0 17 0" fill="none" stroke="#d3bc20" stroke-width="1.400"/></svg>
        </div>
        <div class="pc">1%</div>
        <div class="vb"></div>
        <div class="rt"><span class="mhz">2208 MHz</span></div>
      </div>

      <div class="wd mon ram">
        <div>
          <div class="lb">RAM</div>
          <svg class="g2" width="96" height="6" viewBox="0 0 96 6"><rect y="2" width="96" height="4" fill="#7d97cc"/><path d="M0 1.500h95" stroke="#e0c428" stroke-width="1.500"/></svg>
        </div>
        <div class="pc">14%</div>
        <div class="vb"><i style="height:14%"></i></div>
        <div class="rt">
          <div class="rl r1">2.2 GB</div>
          <div class="rl r2">OF</div>
          <div class="rl r3">15.9 GB</div>
        </div>
      </div>

      <div class="wd net">
        <div class="lb">Net</div>
        <div class="nb2">
          <svg width="150" height="62" viewBox="0 0 150 62">
            <path d="M1 2v36h12l2-5 2 5h15l3-3 3 3h35l30 0 45-1" fill="none" stroke="#d3bc20" stroke-width="1.300"/>
            <path d="M147 44H1v30" fill="none" stroke="#d3bc20" stroke-width="1.300"/>
          </svg>
          <div class="nt"><div>0 d 0h 33m</div><div>In: 0.0 B</div><div class="out">Out: 0.0 B</div></div>
        </div>
      </div>

      <div class="wd drives">
        ${drives.map((d, i) => html`
          <div class="drive">
            <div><div class="lt">${d[0]}</div><div class="pct">${d[1]}</div></div>
            <div>
              <div class="dt"><span class="di">${i === 0 ? winlogo(13, "#2fa8f0") : html`<i class="dash"></i>`}</span>${d[2]}</div>
              <div class="ds">${d[3]}</div>
              <div class="bar"><i class=${(d[4] as number) > 80 ? "hot" : ""} style="width:${d[4]}%"></i></div>
            </div>
          </div>`)}
      </div>
    `;
  }

  ribbonItem(it: Item) {
    if (it.sep) return html`<i class="rsep" style="margin-left:${it.ml}px"></i>`;
    if (it.list)
      return html`<div class="list ${it.tall ? "tall" : ""} ${it.shift ? "shift" : ""}" style="margin-left:${it.ml || 0}px">
        ${it.list.map((r: any) => html`<div class="small ${r[3] ? "off" : ""}"><span class="si">${r[0]}</span><span>${r[1]}</span>${r[2] ? dd : ""}</div>`)}
      </div>`;
    return html`<div class="big ${it.off ? "off" : ""}" style="width:${it.w}px;margin-left:${it.ml || 0}px">
      <div class="ic">${it.icon}</div>
      ${it.l.map((t: string, i: number) => html`<div class="t">${t}${it.d && i === it.l.length - 1 ? dd : ""}</div>`)}
    </div>`;
  }
}
